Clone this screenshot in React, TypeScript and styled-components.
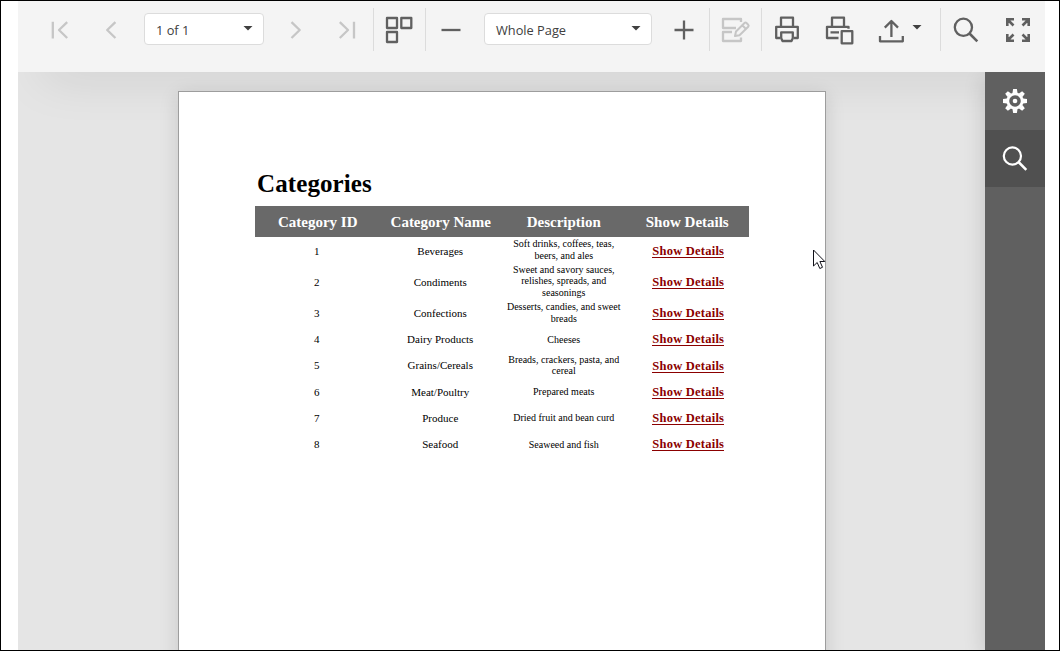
import React from "react";
import styled, { createGlobalStyle } from "styled-components";

const GlobalStyle = createGlobalStyle`
  *, *::before, *::after { box-sizing: border-box; }
  body { margin: 0; background: #fff; }
`;

const Frame = styled.div`
  width: 1060px;
  height: 651px;
  padding: 0 14px 0 17px;
  border: 1px solid #000;
  background: #fff;
  overflow: hidden;
`;

const Viewer = styled.div`
  display: flex;
  flex-direction: column;
  height: 100%;
  overflow: hidden;
  background: #e5e5e5;
  font-family: "Open Sans", "Noto Sans", sans-serif;
`;

const Toolbar = styled.header`
  position: relative;
  z-index: 1;
  display: flex;
  align-items: center;
  flex: none;
  height: 71px;
  padding: 0 0 13px 16px;
  background: #f4f4f4;
  box-shadow: 0 25px 50px -25px rgba(0, 0, 0, 0.17);
`;

const ToolButton = styled.button<{ $disabled?: boolean }>`
  flex: none;
  display: flex;
  padding: 0;
  border: 0;
  background: none;
  color: ${(p) => (p.$disabled ? "#c6c6c6" : "#606060")};
`;

const Separator = styled.span`
  flex: none;
  width: 1px;
  height: 43px;
  margin-bottom: 1px;
  background: #dcdcdc;
`;

const Combo = styled.div<{ $width: number }>`
  flex: none;
  display: flex;
  align-items: center;
  justify-content: space-between;
  width: ${(p) => p.$width}px;
  height: 32px;
  margin: 0 6px 2px;
  padding: 1px 10px 0 11px;
  border: 1px solid #dcdcdc;
  border-radius: 4px;
  background: #fff;
  color: #404040;
  font-size: 12.8px;
  line-height: 18px;
`;

const Caret = styled.span`
  width: 10px;
  height: 5px;
  margin-bottom: 3px;
  background: #404040;
  clip-path: polygon(0 0, 100% 0, 50% 100%);
`;

const CaretButton = styled(ToolButton)`
  width: 30px;
  padding: 0 0 3px 2px;
`;

const Workspace = styled.div`
  position: relative;
  z-index: 2;
  display: flex;
  flex: 1;
  min-height: 0;
  overflow: hidden;
`;

const Canvas = styled.main`
  flex: 1;
  padding: 19px 0 0 160px;
`;

const Page = styled.article`
  width: 648px;
  height: 600px;
  padding: 77px 76px 0;
  border: 1px solid #9d9d9d;
  background: #fff;
  box-shadow: 0 4px 18px rgba(0, 0, 0, 0.13);
  color: #000;
  font-family: "Liberation Serif", "Times New Roman", serif;
`;

const Title = styled.h1`
  margin: 0;
  padding-left: 2px;
  height: 37px;
  font-size: 25px;
  line-height: 30px;
  letter-spacing: 0.1px;
`;

const Row = styled.div<{ $height: number }>`
  display: grid;
  grid-template-columns: repeat(4, 123.5px);
  align-items: center;
  height: ${(p) => p.$height}px;
  text-align: center;
`;

const HeaderRow = styled(Row)`
  background: #696969;
  color: #fff;
  font-size: 15px;
  font-weight: bold;
  line-height: 18px;
`;

const Heading = styled.span<{ $shift?: number }>`
  padding-left: ${(p) => p.$shift ?? 0}px;
`;

const Cell = styled.span<{ $top?: number }>`
  padding-top: ${(p) => p.$top ?? 1}px;
  font-size: 11px;
  line-height: 13px;
`;

const Description = styled.span<{ $top?: number }>`
  padding-top: ${(p) => p.$top ?? 0}px;
  padding-bottom: ${(p) => (p.$top ? 0 : 1)}px;
  font-size: 10px;
  line-height: 11.5px;
  white-space: pre-line;
`;

const DetailsLink = styled.a<{ $drop?: boolean }>`
  justify-self: center;
  height: 14px;
  margin: ${(p) => (p.$drop ? 1 : 0)}px 0 0 2px;
  border-bottom: 1px solid #8b0000;
  color: #8b0000;
  font-size: 12.5px;
  font-weight: bold;
  letter-spacing: 0.23px;
  line-height: 14px;
  white-space: nowrap;
`;

const SidePanel = styled.aside`
  flex: none;
  width: 60px;
  background: #606060;
  box-shadow: 0 6px 22px rgba(0, 0, 0, 0.16);
`;

const SideTab = styled.button<{ $dark?: boolean }>`
  display: flex;
  align-items: center;
  justify-content: center;
  width: 60px;
  height: ${(p) => (p.$dark ? 57 : 58)}px;
  padding: 0;
  border: 0;
  background: ${(p) => (p.$dark ? "#505050" : "#606060")};
  color: #fff;
`;

const Pointer = styled.svg`
  position: absolute;
  z-index: 3;
  left: 812px;
  top: 248px;
`;

type GlyphProps = { x: number; w: number; children: React.ReactNode };

/* Toolbar glyphs share the toolbar's coordinate space, one window per button. */
const Glyph = ({ x, w, children }: GlyphProps) => (
  <svg
    width={w}
    height={32}
    viewBox={`${x} 14 ${w} 32`}
    fill="none"
    stroke="currentColor"
    strokeWidth={2.3}
    strokeLinejoin="round"
  >
    {children}
  </svg>
);

const rows = [
  { name: "Beverages", text: "Soft drinks, coffees, teas,\nbeers, and ales", height: 26, drop: true, cellTop: 2 },
  { name: "Condiments", text: "Sweet and savory sauces,\nrelishes, spreads, and\nseasonings", height: 37 },
  { name: "Confections", text: "Desserts, candies, and sweet\nbreads", height: 26 },
  { name: "Dairy Products", text: "Cheeses", height: 26, top: 2 },
  { name: "Grains/Cereals", text: "Breads, crackers, pasta, and\ncereal", height: 27, cellTop: 0 },
  { name: "Meat/Poultry", text: "Prepared meats", height: 26 },
  { name: "Produce", text: "Dried fruit and bean curd", height: 26 },
  { name: "Seafood", text: "Seaweed and fish", height: 26, top: 2 },
];

export default function App() {
  return (
    <Frame>
      <GlobalStyle />
      <Viewer>
        <Toolbar>
          <ToolButton $disabled aria-label="First page">
            <Glyph x={34} w={52}><path d="M52.8 21.8v16.6M67.2 22.2L59 30l8.2 8" /></Glyph>
          </ToolButton>
          <ToolButton $disabled aria-label="Previous page">
            <Glyph x={86} w={52}><path d="M115.4 22.2L107.2 30l8.2 8" /></Glyph>
          </ToolButton>
          <Combo $width={120}>1 of 1<Caret /></Combo>
          <ToolButton $disabled aria-label="Next page">
            <Glyph x={270} w={52}><path d="M291.5 22.2l8.2 7.8-8.2 8" /></Glyph>
          </ToolButton>
          <ToolButton $disabled aria-label="Last page">
            <Glyph x={322} w={51}><path d="M339.8 22.2L348 30l-8.2 8M354 21.8v16.6" /></Glyph>
          </ToolButton>
          <Separator />
          <ToolButton aria-label="Multipage view">
            <Glyph x={374} w={51}><path d="M387 18h10v10h-10zM401.300 18h10v10h-10zM387 32h10v10h-10z" /></Glyph>
          </ToolButton>
          <Separator />
          <ToolButton aria-label="Zoom out">
            <Glyph x={426} w={52}><path d="M441.5 30h19" /></Glyph>
          </ToolButton>
          <Combo $width={168}>Whole Page<Caret /></Combo>
          <ToolButton aria-label="Zoom in">
            <Glyph x={658} w={51}><path d="M674.5 30h19M684 20.5v19" /></Glyph>
          </ToolButton>
          <Separator />
          <ToolButton $disabled aria-label="Edit fields">
            <Glyph x={710} w={51}>
              <path d="M741 22v-3h-18v9h13M732 32h-9v9h18v-3.500" />
              <path d="M735 36l1-4.500 8.500-8.500q1-1 2 0l1.700 1.700q1 1 0 2L739.500 35.200zM742.500 25.500l3.500 3.500" strokeWidth={2} />
            </Glyph>
          </ToolButton>
          <Separator />
          <ToolButton aria-label="Print">
            <Glyph x={762} w={51}>
              <path d="M781 26v-8.300h12V26M780 38h-3.800V26.800h21.600V38h-3.800M781.200 32.300h11.600v6l-1.300 2.700h-9l-1.300-2.700z" />
            </Glyph>
          </ToolButton>
          <ToolButton aria-label="Print page">
            <Glyph x={813} w={52}>
              <path d="M832 26v-8.300h12V26M838.500 38h-11.500V26.800h21.500v2M830.500 32.400h8.500M841.700 31.200h10.600v12.100h-10.600z" />
            </Glyph>
          </ToolButton>
          <ToolButton aria-label="Export">
            <Glyph x={865} w={45}><path d="M891.400 37V21M884.800 27.600l6.600-6.600 6.600 6.600M880 36v5.300h22.800V36" /></Glyph>
          </ToolButton>
          <CaretButton aria-label="Export options"><Caret /></CaretButton>
          <Separator />
          <ToolButton aria-label="Search">
            <Glyph x={941} w={51}><circle cx={963.4} cy={27.3} r={8.6} /><path d="M969.500 33.500l7.800 7.800" strokeWidth={2.6} /></Glyph>
          </ToolButton>
          <ToolButton aria-label="Full screen">
            <Glyph x={992} w={53}>
              <path
                strokeLinejoin="miter"
                strokeWidth={2.6}
                d="M1007.300 26v-6.700h6.700M1007.500 19.500l6 6M1022 19.300h6.700V26M1028.500 19.500l-6 6M1007.300 34v6.700h6.700M1007.500 40.500l6-6M1022 40.700h6.700V34M1028.500 40.500l-6-6"
              />
            </Glyph>
          </ToolButton>
        </Toolbar>
        <Workspace>
          <Canvas>
            <Page>
              <Title>Categories</Title>
              <HeaderRow $height={31}>
                <Heading $shift={2}>Category ID</Heading>
                <Heading $shift={1}>Category Name</Heading>
                <Heading>Description</Heading>
                <Heading>Show Details</Heading>
              </HeaderRow>
              {rows.map((row, i) => (
                <Row key={row.name} $height={row.height}>
                  <Cell $top={row.cellTop}>{i + 1}</Cell>
                  <Cell $top={row.cellTop}>{row.name}</Cell>
                  <Description $top={row.top}>{row.text}</Description>
                  <DetailsLink $drop={row.drop}>Show Details</DetailsLink>
                </Row>
              ))}
            </Page>
          </Canvas>
          <SidePanel>
            <SideTab aria-label="Settings">
              <svg width={24} height={24} viewBox="-12 -12 24 24" fill="none" stroke="currentColor">
                <circle r={7.2} strokeWidth={2.8} />
                {[0, 45, 90, 135, 180, 225, 270, 315].map((a) => (
                  <path key={a} d="M-2.500-8l.600-4h3.800l.600 4z" fill="currentColor" stroke="none" transform={`rotate(${a})`} />
                ))}
                <circle r={2.3} fill="currentColor" stroke="none" />
              </svg>
            </SideTab>
            <SideTab $dark aria-label="Search">
              <svg width={26} height={26} viewBox="1002 145.500 26 26" fill="none" stroke="currentColor" strokeWidth={2.2}>
                <circle cx={1012.4} cy={155.5} r={8.6} />
                <path d="M1018.500 161.500l7.800 7.800" strokeWidth={2.5} />
              </svg>
            </SideTab>
          </SidePanel>
        </Workspace>
      </Viewer>
      <Pointer width={14} height={22} viewBox="0 0 14 22">
        <path d="M1.500 2v16l3.700-3.500 2.600 6 2.700-1.200-2.600-5.800h4.900z" fill="#fff" stroke="#101018" />
      </Pointer>
    </Frame>
  );
}
